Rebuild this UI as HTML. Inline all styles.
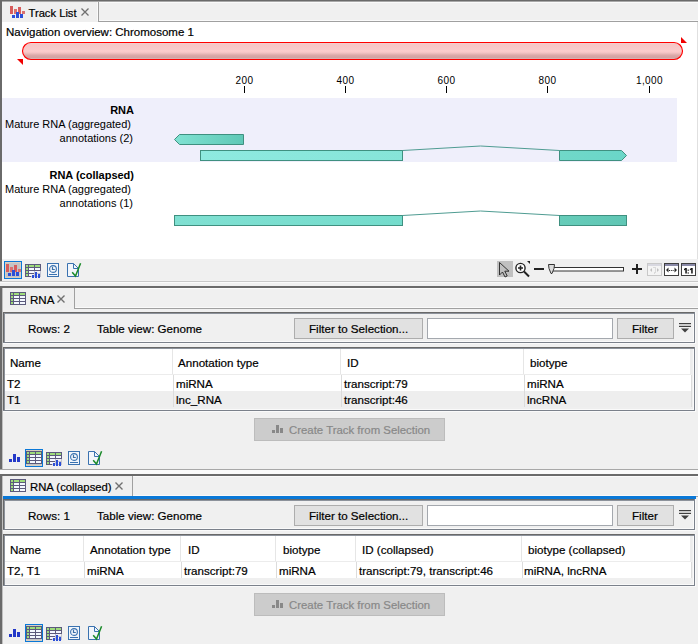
<!DOCTYPE html>
<html><head><meta charset="utf-8">
<style>
*{margin:0;padding:0;box-sizing:border-box}
html,body{width:698px;height:644px;overflow:hidden;background:#f0f0f0;font-family:"Liberation Sans",sans-serif;color:#000}
.a{position:absolute}
.t{position:absolute;white-space:nowrap;font-size:11.6px;line-height:11px;-webkit-text-stroke:0.2px currentColor}
.j{-webkit-text-stroke:0}
.j{font-size:11px}
.b{font-weight:bold}
.r{text-align:right}
svg{position:absolute;overflow:visible}
</style></head><body>

<!-- ============ PANEL 1 : TRACK LIST ============ -->
<div class="a" style="left:0;top:0;width:698px;height:281px;background:#f0f0f0"></div>
<div class="a" style="left:0;top:0;width:698px;height:1px;background:#6a6a6a"></div>
<div class="a" style="left:0;top:1px;width:698px;height:1px;background:#a8a8a8"></div>
<div class="a" style="left:0;top:0;width:2px;height:281px;background:#6a6a6a"></div>
<!-- tab row -->
<div class="a" style="left:2px;top:2px;width:96px;height:20px;background:#efefef"></div>
<div class="a" style="left:97px;top:2px;width:1px;height:19px;background:#fafafa"></div>
<div class="a" style="left:98px;top:2px;width:1px;height:20px;background:#a0a0a0"></div>
<div class="a" style="left:99px;top:2px;width:599px;height:1px;background:#fafafa"></div>
<div class="a" style="left:99px;top:20px;width:599px;height:1px;background:#fafafa"></div>
<div class="a" style="left:98px;top:21px;width:600px;height:1px;background:#a0a0a0"></div>
<svg style="left:10px;top:6px" width="16" height="13" viewBox="0 0 16 13">
 <rect x="0" y="0" width="3" height="8" fill="#d75c5c"/>
 <rect x="4" y="3" width="3" height="5" fill="#da7070"/>
 <rect x="8" y="1" width="3" height="7" fill="#d75c5c"/>
 <rect x="12" y="5" width="3" height="3" fill="#da7070"/>
 <rect x="2" y="9" width="3" height="3" fill="#2b4fd8"/>
 <rect x="6" y="6" width="3" height="6" fill="#2b4fd8"/>
 <rect x="10" y="8" width="3" height="4" fill="#2b4fd8"/>
</svg>
<div class="t" style="left:28.5px;top:8px;font-size:11.2px">Track List</div>
<svg style="left:81px;top:8px" width="8" height="8" viewBox="0 0 8 8"><path d="M0.5 0.5L7.5 7.5M7.5 0.5L0.5 7.5" stroke="#707070" stroke-width="1.3"/></svg>

<!-- content -->
<div class="a" style="left:2px;top:22px;width:696px;height:237px;background:#fff"></div>
<div class="a" style="left:697px;top:22px;width:1px;height:237px;background:#e0e0e0"></div>
<div class="t" style="left:6px;top:26.5px;font-size:11.5px">Navigation overview: Chromosome 1</div>
<svg style="left:0;top:0" width="698" height="260">
 <defs>
  <linearGradient id="pg" x1="0" y1="0" x2="0" y2="1">
   <stop offset="0" stop-color="#f2d4d4"/><stop offset="0.1" stop-color="#f5c6c6"/><stop offset="0.4" stop-color="#f8caca"/><stop offset="0.5" stop-color="#fccccc"/><stop offset="0.6" stop-color="#f4c4c4"/><stop offset="0.75" stop-color="#dba9a9"/><stop offset="0.88" stop-color="#d2a2a2"/><stop offset="0.95" stop-color="#d8b2b2"/><stop offset="1" stop-color="#d8b2b2"/>
  </linearGradient>
  <linearGradient id="g1" x1="0" y1="0" x2="1" y2="0">
   <stop offset="0" stop-color="#80e2d2"/><stop offset="1" stop-color="#5fc8b6"/>
  </linearGradient>
  <linearGradient id="g2" x1="0" y1="0" x2="1" y2="0">
   <stop offset="0" stop-color="#8eeae0"/><stop offset="1" stop-color="#86e4d8"/>
  </linearGradient>
  <linearGradient id="g3" x1="0" y1="0" x2="1" y2="0">
   <stop offset="0" stop-color="#70d8c8"/><stop offset="1" stop-color="#6ad6c8"/>
  </linearGradient>
  <linearGradient id="g4" x1="0" y1="0" x2="1" y2="0">
   <stop offset="0" stop-color="#80e0d2"/><stop offset="1" stop-color="#74dccc"/>
  </linearGradient>
  <linearGradient id="g5" x1="0" y1="0" x2="1" y2="0">
   <stop offset="0" stop-color="#66ccb9"/><stop offset="1" stop-color="#60c6b4"/>
  </linearGradient>
 </defs>
 <rect x="22.5" y="42.5" width="660" height="17" rx="8.5" ry="8.5" fill="url(#pg)" stroke="#ff0000" stroke-width="1.15"/>
 <path d="M17 59H23V65Z" fill="#f00000"/>
 <path d="M681 37V43H687Z" fill="#f00000"/>
 <!-- ruler -->
 <g fill="#000">
  <rect x="244" y="86" width="1" height="7"/>
  <rect x="345" y="86" width="1" height="7"/>
  <rect x="446" y="86" width="1" height="7"/>
  <rect x="547" y="86" width="1" height="7"/>
  <rect x="649" y="86" width="1" height="7"/>
 </g>
 <!-- lavender -->
 <rect x="2" y="98" width="675" height="64" fill="#efeffb"/>
 <!-- track 1 -->
 <path d="M174.5 139.5L179.5 134.5H243.5V144.5H179.5Z" fill="url(#g1)" stroke="#3f9080" stroke-width="1"/>
 <rect x="200.5" y="150.5" width="202" height="10" fill="url(#g2)" stroke="#3f9080" stroke-width="1"/>
 <path d="M402.5 150.5L480.5 146L559.5 150.5" fill="none" stroke="#4f9c92" stroke-width="1"/>
 <path d="M559.5 150.5H621.5L626.5 155.5L621.5 160.5H559.5Z" fill="url(#g3)" stroke="#3f9080" stroke-width="1"/>
 <!-- track 2 -->
 <rect x="174.5" y="215.5" width="228" height="10" fill="url(#g4)" stroke="#3f9080" stroke-width="1"/>
 <path d="M402.5 215.5L480.5 211L559.5 215.5" fill="none" stroke="#4f9c92" stroke-width="1"/>
 <rect x="559.5" y="215.5" width="67" height="10" fill="url(#g5)" stroke="#3f9080" stroke-width="1"/>
</svg>
<div class="t j" style="left:214.5px;width:60px;text-align:center;top:75px;font-size:10px;letter-spacing:0.4px">200</div>
<div class="t j" style="left:315.5px;width:60px;text-align:center;top:75px;font-size:10px;letter-spacing:0.4px">400</div>
<div class="t j" style="left:416.5px;width:60px;text-align:center;top:75px;font-size:10px;letter-spacing:0.4px">600</div>
<div class="t j" style="left:517.5px;width:60px;text-align:center;top:75px;font-size:10px;letter-spacing:0.4px">800</div>
<div class="t j" style="left:619.5px;width:60px;text-align:center;top:75px;font-size:10px;letter-spacing:0.4px">1,000</div>

<div class="t j b r" style="left:30px;width:104px;top:104.5px">RNA</div>
<div class="t j r" style="left:0px;width:131px;top:119px">Mature RNA (aggregated)</div>
<div class="t j r" style="left:0px;width:133px;top:133px">annotations (2)</div>
<div class="t j b r" style="left:30px;width:104px;top:169.5px">RNA (collapsed)</div>
<div class="t j r" style="left:0px;width:131px;top:184px">Mature RNA (aggregated)</div>
<div class="t j r" style="left:0px;width:133px;top:198px">annotations (1)</div>

<!-- toolbar 1 -->
<div class="a" style="left:2px;top:259px;width:696px;height:22px;background:#f0f0f0"></div>

<!-- gap -->
<div class="a" style="left:0;top:281px;width:698px;height:1px;background:#c8c8c8"></div>
<div class="a" style="left:0;top:282px;width:698px;height:1px;background:#fafafa"></div>

<!-- GENERATED -->
<div class="a" style="left:4px;top:261px;width:18px;height:18px;background:#0a78d7"></div><div class="a" style="left:5px;top:262px;width:16px;height:16px;background:#d8cfc4"></div><div class="a" style="left:6px;top:263px;width:14px;height:14px;background:#c4c4c4"></div>
<svg style="left:6px;top:264px" width="15" height="12" viewBox="0 0 15 12">
 <rect x="0" y="0" width="3" height="8" fill="#d75c5c"/>
 <rect x="4" y="3" width="3" height="5" fill="#da7070"/>
 <rect x="8" y="1" width="3" height="7" fill="#d75c5c"/>
 <rect x="12" y="5" width="3" height="3" fill="#da7070"/>
 <rect x="2" y="9" width="3" height="3" fill="#2b4fd8"/>
 <rect x="6" y="6" width="3" height="6" fill="#2b4fd8"/>
 <rect x="10" y="8" width="3" height="4" fill="#2b4fd8"/>
</svg>
<svg style="left:25px;top:264px" width="16" height="13" viewBox="0 0 16 13"><rect x="0" y="0" width="16" height="13" fill="#5c5a7c"/><rect x="1" y="1" width="2" height="2" fill="#9fdc7c"/><rect x="4" y="1" width="5" height="2" fill="#9fdc7c"/><rect x="10" y="1" width="5" height="2" fill="#9fdc7c"/><rect x="1" y="4" width="2" height="2" fill="#9fdc7c"/><rect x="4" y="4" width="5" height="2" fill="#f4f8ff"/><rect x="10" y="4" width="5" height="2" fill="#f4f8ff"/><rect x="1" y="7" width="2" height="2" fill="#9fdc7c"/><rect x="4" y="7" width="5" height="2" fill="#f4f8ff"/><rect x="10" y="7" width="5" height="2" fill="#f4f8ff"/><rect x="1" y="10" width="2" height="2" fill="#9fdc7c"/><rect x="4" y="10" width="5" height="2" fill="#f4f8ff"/><rect x="10" y="10" width="5" height="2" fill="#f4f8ff"/></svg><svg style="left:25px;top:264px" width="17" height="15" viewBox="0 0 17 15">
 <path d="M6 10H9V7H16V14H6Z" fill="#eef0f4" opacity="0.7"/>
 <rect x="7" y="11" width="2" height="3" fill="#2b4fd8"/>
 <rect x="10" y="8" width="2" height="6" fill="#2b4fd8"/>
 <rect x="13" y="10" width="2" height="4" fill="#2b4fd8"/>
</svg>
<svg style="left:47px;top:263px" width="12" height="14" viewBox="0 0 12 14">
 <rect x="0.5" y="0.5" width="11" height="13" fill="#f2f6fb" stroke="#3a72b0" stroke-width="1"/>
 <circle cx="6" cy="6" r="3.4" fill="none" stroke="#3a72b0" stroke-width="1.1"/>
 <path d="M5.5 3.8V6.5H7.8" fill="none" stroke="#3a70a8" stroke-width="1.2"/>
 <rect x="2" y="11" width="8" height="1" fill="#3a72b0"/>
</svg>
<svg style="left:67px;top:263px" width="15" height="14" viewBox="0 0 15 14">
 <path d="M0.5 0.5H6.5L11.5 5.5V13.5H0.5Z" fill="#f2f6fb" stroke="#3a72b0" stroke-width="1"/>
 <path d="M6.5 0.5V5.5H11.5" fill="none" stroke="#3a72b0" stroke-width="1"/>
 <path d="M5.2 9.3L8.5 13.1L13.6 0.3" fill="none" stroke="#1a8a2a" stroke-width="1.5"/>
</svg>
<div class="a" style="left:497px;top:261px;width:16px;height:16px;background:#c0c0c0"></div><svg style="left:0;top:0" width="698" height="282" viewBox="0 0 698 282">
 <path d="M499.5 262.5V275L502.5 272L505 277L507.2 276L504.8 271.2H509Z" fill="none" stroke="#222" stroke-width="0.9" stroke-linejoin="round"/>
 <circle cx="520.5" cy="268" r="4.6" fill="#fff" stroke="#222" stroke-width="1.4"/>
 <path d="M518 268H523M520.5 265.5V270.5" stroke="#222" stroke-width="1.6"/>
 <path d="M524 271.5L529 276.5" stroke="#222" stroke-width="2"/>
 <path d="M527 261H530V264Z" fill="#222"/>
 <rect x="534" y="268" width="10" height="2" fill="#222"/>
 <rect x="552.5" y="267.5" width="71" height="3.5" fill="#fff" stroke="#333" stroke-width="1"/>
 <path d="M548.5 264.5H554.5L554 268.5L552 273.5H551L549 268.5Z" fill="#dcdcdc" stroke="#333" stroke-width="1"/>
 <rect x="632" y="268" width="10" height="2" fill="#222"/>
 <rect x="636" y="264" width="2" height="10" fill="#222"/>
 <rect x="647.5" y="263.5" width="14" height="12" fill="#f4f4f4" stroke="#c8c8c8" stroke-width="1"/>
 <rect x="648" y="264" width="13" height="2" fill="#d8d8e0"/>
 <path d="M650 270L652 268V272Z M659 270L657 268V272Z" fill="#c0c0c0"/>
 <path d="M653.5 267.5H655.5V273H653.5" fill="none" stroke="#c0c0c0" stroke-width="1" stroke-dasharray="1 1"/>
 <rect x="664.5" y="263.5" width="14" height="12" fill="#fff" stroke="#404040" stroke-width="1"/>
 <rect x="665" y="264" width="13" height="2" fill="#8a8aa8"/>
 <path d="M666 270L668.5 267.5V272.5Z M677 270L674.5 267.5V272.5Z" fill="#222"/>
 <path d="M669 270.5H674" stroke="#222" stroke-width="1" stroke-dasharray="1.2 1"/>
 <rect x="681.5" y="263.5" width="14" height="12" fill="#fff" stroke="#404040" stroke-width="1"/>
 <rect x="682" y="264" width="13" height="2" fill="#8a8aa8"/>

 <path d="M685.3 268H686.8V273.6H685.3V269.6L684 270.4V269.1Z" fill="#111"/>
 <rect x="687.6" y="269.6" width="1.2" height="1.2" fill="#111"/><rect x="687.6" y="272.4" width="1.2" height="1.2" fill="#111"/>
 <path d="M691.2 268H692.7V273.6H691.2V269.6L689.9 270.4V269.1Z" fill="#111"/>
</svg>
<div class="a" style="left:0px;top:286px;width:698px;height:2px;background:#6a6a6a"></div><div class="a" style="left:0px;top:286px;width:2px;height:183px;background:#6a6a6a"></div><div class="a" style="left:2px;top:288px;width:1px;height:181px;background:#c0c0c0"></div>
<div class="a" style="left:3px;top:288px;width:71px;height:20px;background:#efefef"></div><div class="a" style="left:74px;top:288px;width:1px;height:21px;background:#a0a0a0"></div><div class="a" style="left:75px;top:288px;width:623px;height:1px;background:#fafafa"></div><div class="a" style="left:75px;top:307px;width:623px;height:1px;background:#fafafa"></div><div class="a" style="left:74px;top:308px;width:624px;height:1px;background:#a0a0a0"></div><svg style="left:10px;top:292px" width="16" height="13" viewBox="0 0 16 13"><rect x="0" y="0" width="16" height="13" fill="#5c5a7c"/><rect x="1" y="1" width="2" height="2" fill="#9fdc7c"/><rect x="4" y="1" width="5" height="2" fill="#9fdc7c"/><rect x="10" y="1" width="5" height="2" fill="#9fdc7c"/><rect x="1" y="4" width="2" height="2" fill="#9fdc7c"/><rect x="4" y="4" width="5" height="2" fill="#f4f8ff"/><rect x="10" y="4" width="5" height="2" fill="#f4f8ff"/><rect x="1" y="7" width="2" height="2" fill="#9fdc7c"/><rect x="4" y="7" width="5" height="2" fill="#f4f8ff"/><rect x="10" y="7" width="5" height="2" fill="#f4f8ff"/><rect x="1" y="10" width="2" height="2" fill="#9fdc7c"/><rect x="4" y="10" width="5" height="2" fill="#f4f8ff"/><rect x="10" y="10" width="5" height="2" fill="#f4f8ff"/></svg><div class="t" style="left:30px;top:294px;font-size:11.6px">RNA</div>
<svg style="left:57px;top:295px" width="8" height="8" viewBox="0 0 8 8"><path d="M0.5 0.5L7.5 7.5M7.5 0.5L0.5 7.5" stroke="#707070" stroke-width="1.4"/></svg>
<div class="a" style="left:3px;top:312px;width:693px;height:32px;background:#fafafa"></div><div class="a" style="left:3px;top:312px;width:692px;height:31px;background:#7b818b"></div><div class="a" style="left:3px;top:312px;width:691px;height:30px;background:#696969"></div><div class="a" style="left:4px;top:313px;width:690px;height:29px;background:#8c929b"></div><div class="a" style="left:5px;top:314px;width:689px;height:28px;background:#fafafa"></div><div class="a" style="left:5px;top:314px;width:688px;height:27px;background:#f0f0f0"></div><div class="t" style="left:28px;top:323px;">Rows: 2</div><div class="t" style="left:97px;top:323px;">Table view: Genome</div><div class="a" style="left:294px;top:318px;width:129px;height:21px;background:#adadad"></div><div class="a" style="left:295px;top:319px;width:127px;height:19px;background:#e1e1e1"></div><div class="t" style="left:309px;top:323px;">Filter to Selection...</div><div class="a" style="left:427px;top:318px;width:186px;height:21px;background:#a4a8ae"></div><div class="a" style="left:428px;top:319px;width:184px;height:19px;background:#ffffff"></div><div class="a" style="left:617px;top:318px;width:57px;height:21px;background:#adadad"></div><div class="a" style="left:618px;top:319px;width:55px;height:19px;background:#e1e1e1"></div><div class="t" style="left:632px;top:323px;">Filter</div><svg style="left:679px;top:323px" width="12" height="10" viewBox="0 0 12 10">
 <rect x="0" y="0" width="12" height="1.2" fill="#404040"/><rect x="0" y="2.8" width="12" height="1.2" fill="#404040"/>
 <path d="M2 5.5H10L6 9.5Z" fill="#404040"/></svg>
<div class="a" style="left:3px;top:347px;width:693px;height:65px;background:#fafafa"></div><div class="a" style="left:3px;top:347px;width:692px;height:64px;background:#7b818b"></div><div class="a" style="left:3px;top:347px;width:691px;height:63px;background:#696969"></div><div class="a" style="left:4px;top:348px;width:690px;height:62px;background:#8c929b"></div><div class="a" style="left:5px;top:349px;width:689px;height:61px;background:#fafafa"></div><div class="a" style="left:5px;top:349px;width:688px;height:60px;background:#efefef"></div><div class="a" style="left:5px;top:349px;width:685px;height:25px;background:#ffffff"></div><div class="a" style="left:690px;top:349px;width:2px;height:25px;background:#ececec"></div><div class="a" style="left:5px;top:374px;width:686px;height:1px;background:#ececec"></div><div class="a" style="left:5px;top:375px;width:686px;height:16px;background:#ffffff"></div><div class="a" style="left:691px;top:375px;width:1px;height:16px;background:#dcdcdc"></div><div class="a" style="left:5px;top:391px;width:686px;height:16px;background:#eeeeee"></div><div class="a" style="left:691px;top:391px;width:1px;height:16px;background:#dcdcdc"></div><div class="a" style="left:172px;top:349px;width:1px;height:25px;background:#e6e6e6"></div><div class="a" style="left:173px;top:375px;width:1px;height:32px;background:#dcdcdc"></div><div class="a" style="left:340px;top:349px;width:1px;height:25px;background:#e6e6e6"></div><div class="a" style="left:341px;top:375px;width:1px;height:32px;background:#dcdcdc"></div><div class="a" style="left:523px;top:349px;width:1px;height:25px;background:#e6e6e6"></div><div class="a" style="left:524px;top:375px;width:1px;height:32px;background:#dcdcdc"></div><div class="t" style="left:10px;top:357px;">Name</div><div class="t" style="left:178px;top:357px;">Annotation type</div><div class="t" style="left:347px;top:357px;">ID</div><div class="t" style="left:530px;top:357px;">biotype</div><div class="t" style="left:7px;top:378px;">T2</div><div class="t" style="left:176px;top:378px;">miRNA</div><div class="t" style="left:344px;top:378px;">transcript:79</div><div class="t" style="left:527px;top:378px;">miRNA</div><div class="t" style="left:7px;top:394px;">T1</div><div class="t" style="left:176px;top:394px;">lnc_RNA</div><div class="t" style="left:344px;top:394px;">transcript:46</div><div class="t" style="left:527px;top:394px;">lncRNA</div>
<div class="a" style="left:254px;top:418px;width:191px;height:23px;background:#bcbcbc"></div><div class="a" style="left:255px;top:419px;width:189px;height:21px;background:#cccccc"></div><svg style="left:272px;top:425px" width="11" height="8" viewBox="0 0 11 8">
 <rect x="0" y="5" width="3" height="3" fill="#888"/><rect x="4" y="0" width="3" height="8" fill="#888"/><rect x="8" y="3" width="3" height="5" fill="#888"/></svg><div class="t" style="left:289px;top:424.6px;color:#888888;font-size:11.4px">Create Track from Selection</div>
<svg style="left:9px;top:454px" width="11" height="8" viewBox="0 0 11 8">
 <rect x="0" y="5" width="3" height="3" fill="#2338c8"/>
 <rect x="4" y="0" width="3" height="8" fill="#2338c8"/>
 <rect x="8" y="3" width="3" height="5" fill="#2338c8"/>
</svg><div class="a" style="left:25px;top:449px;width:18px;height:18px;background:#0a78d7"></div><div class="a" style="left:26px;top:450px;width:16px;height:16px;background:#d8cfc4"></div><div class="a" style="left:27px;top:451px;width:14px;height:14px;background:#c4c4c4"></div><svg style="left:26px;top:451px" width="16" height="13" viewBox="0 0 16 13"><rect x="0" y="0" width="16" height="13" fill="#5c5a7c"/><rect x="1" y="1" width="2" height="2" fill="#9fdc7c"/><rect x="4" y="1" width="5" height="2" fill="#9fdc7c"/><rect x="10" y="1" width="5" height="2" fill="#9fdc7c"/><rect x="1" y="4" width="2" height="2" fill="#9fdc7c"/><rect x="4" y="4" width="5" height="2" fill="#f4f8ff"/><rect x="10" y="4" width="5" height="2" fill="#f4f8ff"/><rect x="1" y="7" width="2" height="2" fill="#9fdc7c"/><rect x="4" y="7" width="5" height="2" fill="#f4f8ff"/><rect x="10" y="7" width="5" height="2" fill="#f4f8ff"/><rect x="1" y="10" width="2" height="2" fill="#9fdc7c"/><rect x="4" y="10" width="5" height="2" fill="#f4f8ff"/><rect x="10" y="10" width="5" height="2" fill="#f4f8ff"/></svg><svg style="left:46px;top:452px" width="16" height="13" viewBox="0 0 16 13"><rect x="0" y="0" width="16" height="13" fill="#5c5a7c"/><rect x="1" y="1" width="2" height="2" fill="#9fdc7c"/><rect x="4" y="1" width="5" height="2" fill="#9fdc7c"/><rect x="10" y="1" width="5" height="2" fill="#9fdc7c"/><rect x="1" y="4" width="2" height="2" fill="#9fdc7c"/><rect x="4" y="4" width="5" height="2" fill="#f4f8ff"/><rect x="10" y="4" width="5" height="2" fill="#f4f8ff"/><rect x="1" y="7" width="2" height="2" fill="#9fdc7c"/><rect x="4" y="7" width="5" height="2" fill="#f4f8ff"/><rect x="10" y="7" width="5" height="2" fill="#f4f8ff"/><rect x="1" y="10" width="2" height="2" fill="#9fdc7c"/><rect x="4" y="10" width="5" height="2" fill="#f4f8ff"/><rect x="10" y="10" width="5" height="2" fill="#f4f8ff"/></svg><svg style="left:46px;top:452px" width="17" height="15" viewBox="0 0 17 15">
 <path d="M6 10H9V7H16V14H6Z" fill="#eef0f4" opacity="0.7"/>
 <rect x="7" y="11" width="2" height="3" fill="#2b4fd8"/>
 <rect x="10" y="8" width="2" height="6" fill="#2b4fd8"/>
 <rect x="13" y="10" width="2" height="4" fill="#2b4fd8"/>
</svg><svg style="left:68px;top:451px" width="12" height="14" viewBox="0 0 12 14">
 <rect x="0.5" y="0.5" width="11" height="13" fill="#f2f6fb" stroke="#3a72b0" stroke-width="1"/>
 <circle cx="6" cy="6" r="3.4" fill="none" stroke="#3a72b0" stroke-width="1.1"/>
 <path d="M5.5 3.8V6.5H7.8" fill="none" stroke="#3a70a8" stroke-width="1.2"/>
 <rect x="2" y="11" width="8" height="1" fill="#3a72b0"/>
</svg><svg style="left:88px;top:451px" width="15" height="14" viewBox="0 0 15 14">
 <path d="M0.5 0.5H6.5L11.5 5.5V13.5H0.5Z" fill="#f2f6fb" stroke="#3a72b0" stroke-width="1"/>
 <path d="M6.5 0.5V5.5H11.5" fill="none" stroke="#3a72b0" stroke-width="1"/>
 <path d="M5.2 9.3L8.5 13.1L13.6 0.3" fill="none" stroke="#1a8a2a" stroke-width="1.5"/>
</svg>
<div class="a" style="left:0px;top:469px;width:698px;height:1px;background:#a8a8a8"></div>
<div class="a" style="left:0px;top:470px;width:698px;height:4px;background:#fafafa"></div>
<div class="a" style="left:0px;top:474px;width:698px;height:2px;background:#6a6a6a"></div><div class="a" style="left:0px;top:474px;width:2px;height:170px;background:#6a6a6a"></div><div class="a" style="left:2px;top:476px;width:1px;height:168px;background:#c0c0c0"></div>
<div class="a" style="left:3px;top:476px;width:129px;height:20px;background:#efefef"></div><div class="a" style="left:132px;top:476px;width:1px;height:21px;background:#a0a0a0"></div><div class="a" style="left:133px;top:476px;width:565px;height:1px;background:#fafafa"></div><div class="a" style="left:133px;top:495px;width:565px;height:1px;background:#fafafa"></div><div class="a" style="left:132px;top:496px;width:566px;height:1px;background:#a0a0a0"></div><svg style="left:10px;top:479px" width="16" height="13" viewBox="0 0 16 13"><rect x="0" y="0" width="16" height="13" fill="#5c5a7c"/><rect x="1" y="1" width="2" height="2" fill="#9fdc7c"/><rect x="4" y="1" width="5" height="2" fill="#9fdc7c"/><rect x="10" y="1" width="5" height="2" fill="#9fdc7c"/><rect x="1" y="4" width="2" height="2" fill="#9fdc7c"/><rect x="4" y="4" width="5" height="2" fill="#f4f8ff"/><rect x="10" y="4" width="5" height="2" fill="#f4f8ff"/><rect x="1" y="7" width="2" height="2" fill="#9fdc7c"/><rect x="4" y="7" width="5" height="2" fill="#f4f8ff"/><rect x="10" y="7" width="5" height="2" fill="#f4f8ff"/><rect x="1" y="10" width="2" height="2" fill="#9fdc7c"/><rect x="4" y="10" width="5" height="2" fill="#f4f8ff"/><rect x="10" y="10" width="5" height="2" fill="#f4f8ff"/></svg><div class="t" style="left:30px;top:482px;font-size:11.3px">RNA (collapsed)</div>
<svg style="left:115px;top:482px" width="8" height="8" viewBox="0 0 8 8"><path d="M0.5 0.5L7.5 7.5M7.5 0.5L0.5 7.5" stroke="#707070" stroke-width="1.4"/></svg>
<div class="a" style="left:3px;top:496px;width:693px;height:3px;background:#0a78d7"></div>
<div class="a" style="left:3px;top:499px;width:693px;height:32px;background:#fafafa"></div><div class="a" style="left:3px;top:499px;width:692px;height:31px;background:#7b818b"></div><div class="a" style="left:3px;top:499px;width:691px;height:30px;background:#696969"></div><div class="a" style="left:4px;top:500px;width:690px;height:29px;background:#8c929b"></div><div class="a" style="left:5px;top:501px;width:689px;height:28px;background:#fafafa"></div><div class="a" style="left:5px;top:501px;width:688px;height:27px;background:#f0f0f0"></div><div class="t" style="left:28px;top:510px;">Rows: 1</div><div class="t" style="left:97px;top:510px;">Table view: Genome</div><div class="a" style="left:294px;top:505px;width:129px;height:21px;background:#adadad"></div><div class="a" style="left:295px;top:506px;width:127px;height:19px;background:#e1e1e1"></div><div class="t" style="left:309px;top:510px;">Filter to Selection...</div><div class="a" style="left:427px;top:505px;width:186px;height:21px;background:#a4a8ae"></div><div class="a" style="left:428px;top:506px;width:184px;height:19px;background:#ffffff"></div><div class="a" style="left:617px;top:505px;width:57px;height:21px;background:#adadad"></div><div class="a" style="left:618px;top:506px;width:55px;height:19px;background:#e1e1e1"></div><div class="t" style="left:632px;top:510px;">Filter</div><svg style="left:679px;top:510px" width="12" height="10" viewBox="0 0 12 10">
 <rect x="0" y="0" width="12" height="1.2" fill="#404040"/><rect x="0" y="2.8" width="12" height="1.2" fill="#404040"/>
 <path d="M2 5.5H10L6 9.5Z" fill="#404040"/></svg>
<div class="a" style="left:3px;top:534px;width:693px;height:53px;background:#fafafa"></div><div class="a" style="left:3px;top:534px;width:692px;height:52px;background:#7b818b"></div><div class="a" style="left:3px;top:534px;width:691px;height:51px;background:#696969"></div><div class="a" style="left:4px;top:535px;width:690px;height:50px;background:#8c929b"></div><div class="a" style="left:5px;top:536px;width:689px;height:49px;background:#fafafa"></div><div class="a" style="left:5px;top:536px;width:688px;height:48px;background:#efefef"></div><div class="a" style="left:5px;top:536px;width:685px;height:25px;background:#ffffff"></div><div class="a" style="left:690px;top:536px;width:2px;height:25px;background:#ececec"></div><div class="a" style="left:5px;top:561px;width:686px;height:1px;background:#ececec"></div><div class="a" style="left:5px;top:562px;width:686px;height:16px;background:#ffffff"></div><div class="a" style="left:691px;top:562px;width:1px;height:16px;background:#dcdcdc"></div><div class="a" style="left:83px;top:536px;width:1px;height:25px;background:#e6e6e6"></div><div class="a" style="left:84px;top:562px;width:1px;height:16px;background:#dcdcdc"></div><div class="a" style="left:180px;top:536px;width:1px;height:25px;background:#e6e6e6"></div><div class="a" style="left:181px;top:562px;width:1px;height:16px;background:#dcdcdc"></div><div class="a" style="left:275px;top:536px;width:1px;height:25px;background:#e6e6e6"></div><div class="a" style="left:276px;top:562px;width:1px;height:16px;background:#dcdcdc"></div><div class="a" style="left:355px;top:536px;width:1px;height:25px;background:#e6e6e6"></div><div class="a" style="left:356px;top:562px;width:1px;height:16px;background:#dcdcdc"></div><div class="a" style="left:521px;top:536px;width:1px;height:25px;background:#e6e6e6"></div><div class="a" style="left:522px;top:562px;width:1px;height:16px;background:#dcdcdc"></div><div class="t" style="left:10px;top:544px;">Name</div><div class="t" style="left:90px;top:544px;">Annotation type</div><div class="t" style="left:188px;top:544px;">ID</div><div class="t" style="left:283px;top:544px;">biotype</div><div class="t" style="left:362px;top:544px;">ID (collapsed)</div><div class="t" style="left:528px;top:544px;">biotype (collapsed)</div><div class="t" style="left:7px;top:565px;">T2, T1</div><div class="t" style="left:87px;top:565px;">miRNA</div><div class="t" style="left:184px;top:565px;">transcript:79</div><div class="t" style="left:279px;top:565px;">miRNA</div><div class="t" style="left:359px;top:565px;">transcript:79, transcript:46</div><div class="t" style="left:524px;top:565px;">miRNA, lncRNA</div>
<div class="a" style="left:254px;top:593px;width:191px;height:23px;background:#bcbcbc"></div><div class="a" style="left:255px;top:594px;width:189px;height:21px;background:#cccccc"></div><svg style="left:272px;top:600px" width="11" height="8" viewBox="0 0 11 8">
 <rect x="0" y="5" width="3" height="3" fill="#888"/><rect x="4" y="0" width="3" height="8" fill="#888"/><rect x="8" y="3" width="3" height="5" fill="#888"/></svg><div class="t" style="left:289px;top:599.6px;color:#888888;font-size:11.4px">Create Track from Selection</div>
<svg style="left:9px;top:629px" width="11" height="8" viewBox="0 0 11 8">
 <rect x="0" y="5" width="3" height="3" fill="#2338c8"/>
 <rect x="4" y="0" width="3" height="8" fill="#2338c8"/>
 <rect x="8" y="3" width="3" height="5" fill="#2338c8"/>
</svg><div class="a" style="left:25px;top:624px;width:18px;height:18px;background:#0a78d7"></div><div class="a" style="left:26px;top:625px;width:16px;height:16px;background:#d8cfc4"></div><div class="a" style="left:27px;top:626px;width:14px;height:14px;background:#c4c4c4"></div><svg style="left:26px;top:626px" width="16" height="13" viewBox="0 0 16 13"><rect x="0" y="0" width="16" height="13" fill="#5c5a7c"/><rect x="1" y="1" width="2" height="2" fill="#9fdc7c"/><rect x="4" y="1" width="5" height="2" fill="#9fdc7c"/><rect x="10" y="1" width="5" height="2" fill="#9fdc7c"/><rect x="1" y="4" width="2" height="2" fill="#9fdc7c"/><rect x="4" y="4" width="5" height="2" fill="#f4f8ff"/><rect x="10" y="4" width="5" height="2" fill="#f4f8ff"/><rect x="1" y="7" width="2" height="2" fill="#9fdc7c"/><rect x="4" y="7" width="5" height="2" fill="#f4f8ff"/><rect x="10" y="7" width="5" height="2" fill="#f4f8ff"/><rect x="1" y="10" width="2" height="2" fill="#9fdc7c"/><rect x="4" y="10" width="5" height="2" fill="#f4f8ff"/><rect x="10" y="10" width="5" height="2" fill="#f4f8ff"/></svg><svg style="left:46px;top:627px" width="16" height="13" viewBox="0 0 16 13"><rect x="0" y="0" width="16" height="13" fill="#5c5a7c"/><rect x="1" y="1" width="2" height="2" fill="#9fdc7c"/><rect x="4" y="1" width="5" height="2" fill="#9fdc7c"/><rect x="10" y="1" width="5" height="2" fill="#9fdc7c"/><rect x="1" y="4" width="2" height="2" fill="#9fdc7c"/><rect x="4" y="4" width="5" height="2" fill="#f4f8ff"/><rect x="10" y="4" width="5" height="2" fill="#f4f8ff"/><rect x="1" y="7" width="2" height="2" fill="#9fdc7c"/><rect x="4" y="7" width="5" height="2" fill="#f4f8ff"/><rect x="10" y="7" width="5" height="2" fill="#f4f8ff"/><rect x="1" y="10" width="2" height="2" fill="#9fdc7c"/><rect x="4" y="10" width="5" height="2" fill="#f4f8ff"/><rect x="10" y="10" width="5" height="2" fill="#f4f8ff"/></svg><svg style="left:46px;top:627px" width="17" height="15" viewBox="0 0 17 15">
 <path d="M6 10H9V7H16V14H6Z" fill="#eef0f4" opacity="0.7"/>
 <rect x="7" y="11" width="2" height="3" fill="#2b4fd8"/>
 <rect x="10" y="8" width="2" height="6" fill="#2b4fd8"/>
 <rect x="13" y="10" width="2" height="4" fill="#2b4fd8"/>
</svg><svg style="left:68px;top:626px" width="12" height="14" viewBox="0 0 12 14">
 <rect x="0.5" y="0.5" width="11" height="13" fill="#f2f6fb" stroke="#3a72b0" stroke-width="1"/>
 <circle cx="6" cy="6" r="3.4" fill="none" stroke="#3a72b0" stroke-width="1.1"/>
 <path d="M5.5 3.8V6.5H7.8" fill="none" stroke="#3a70a8" stroke-width="1.2"/>
 <rect x="2" y="11" width="8" height="1" fill="#3a72b0"/>
</svg><svg style="left:88px;top:626px" width="15" height="14" viewBox="0 0 15 14">
 <path d="M0.5 0.5H6.5L11.5 5.5V13.5H0.5Z" fill="#f2f6fb" stroke="#3a72b0" stroke-width="1"/>
 <path d="M6.5 0.5V5.5H11.5" fill="none" stroke="#3a72b0" stroke-width="1"/>
 <path d="M5.2 9.3L8.5 13.1L13.6 0.3" fill="none" stroke="#1a8a2a" stroke-width="1.5"/>
</svg>
</body></html>
